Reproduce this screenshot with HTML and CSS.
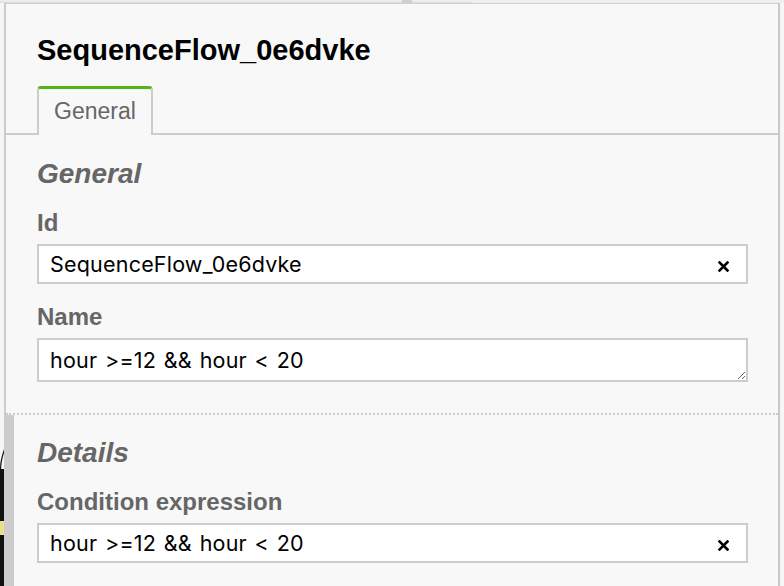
FILE: index.html
```html
<!DOCTYPE html>
<html lang="en">
<head>
<meta charset="utf-8">
<title>Properties Panel</title>
<link rel="stylesheet" href="styles.css">
</head>
<body>
<div class="page">
  <div class="topbar">
    <span class="seg seg-a"></span>
    <span class="seg seg-b"></span>
    <span class="seg seg-c"></span>
  </div>
  <div class="stage">
    <div class="canvas-edge">
      <svg width="4" height="583" viewBox="0 0 4 583">
        <path d="M4 450 C2 456 1 462 1 470 L1 583 L0 583 L0 465 C0 458 2 452 4 446 Z" fill="#111"/>
        <rect x="0" y="466" width="4" height="117" fill="#111"/>
        <rect x="0" y="518" width="4" height="14" fill="#e6e08a"/>
      </svg>
    </div>
    <div class="panel">
      <div class="header">
        <div class="title">SequenceFlow_0e6dvke</div>
      </div>
      <div class="tabs">
        <div class="tab active">General</div>
      </div>
      <div class="group">
        <div class="group-label">General</div>
        <div class="field">
          <label class="field-label">Id</label>
          <div class="input-wrap">
            <input class="input" type="text" value="SequenceFlow_0e6dvke">
            <span class="clear"><svg width="11" height="11" viewBox="0 0 11 11"><path d="M1.5 1.5 L9.5 9.5 M9.5 1.5 L1.5 9.5" stroke="#000" stroke-width="2.6" stroke-linecap="square"/></svg></span>
          </div>
        </div>
        <div class="field">
          <label class="field-label">Name</label>
          <textarea class="textarea">hour &gt;=12 &amp;&amp; hour &lt; 20</textarea>
        </div>
      </div>
      <div class="group hovered">
        <div class="group-toggle"></div>
        <div class="group-label">Details</div>
        <div class="field">
          <label class="field-label">Condition expression</label>
          <div class="input-wrap">
            <input class="input" type="text" value="hour >=12 && hour < 20">
            <span class="clear"><svg width="11" height="11" viewBox="0 0 11 11"><path d="M1.5 1.5 L9.5 9.5 M9.5 1.5 L1.5 9.5" stroke="#000" stroke-width="2.6" stroke-linecap="square"/></svg></span>
          </div>
        </div>
      </div>
    </div>
    <div class="right-edge"></div>
  </div>
</div>
</body>
</html>
```

FILE: styles.css
```css
* { box-sizing: border-box; }

html, body {
  margin: 0;
  padding: 0;
  width: 784px;
  height: 586px;
  overflow: hidden;
  background: #f6f6f6;
}

.page {
  width: 784px;
  height: 586px;
  display: flex;
  flex-direction: column;
  font-family: "Liberation Sans", Arial, sans-serif;
}

.topbar {
  height: 3px;
  display: flex;
  background: #efefef;
  flex: none;
}

.seg { display: block; height: 3px; }
.seg-a { width: 402px; background: #ececec; border-bottom: 1px solid #dcdcdc; }
.seg-b { width: 10px; background: #d0d0d0; }
.seg-c { width: 60px; background: #eeeeee; border-bottom: 1px solid #dcdcdc; }

.stage {
  flex: 1;
  display: flex;
  min-height: 0;
}

.canvas-edge {
  width: 4px;
  flex: none;
  background: #f6f6f6;
}

.canvas-edge svg { display: block; }

.right-edge {
  width: 4px;
  flex: none;
  background: #f6f6f6;
}

.panel {
  flex: 1;
  background: #f8f8f8;
  border-left: 2px solid #cccccc;
  border-right: 2px solid #c8c8c8;
  border-top: 1px solid #d0d0d0;
  overflow: hidden;
}

.header {
  padding: 29px 30px 0 31px;
}

.title {
  font-size: 29px;
  line-height: 34px;
  font-weight: bold;
  color: #000;
}

.tabs {
  margin-top: 19px;
  border-bottom: 2px solid #cccccc;
  padding-left: 31px;
  display: flex;
  height: 49px;
}

.tab {
  width: 116px;
  height: 49px;
  border: 2px solid #cccccc;
  border-bottom: none;
  border-top: 3px solid #52b415;
  border-radius: 4px 4px 0 0;
  background: #f8f8f8;
  color: #666;
  font-size: 23px;
  line-height: 44px;
  text-align: center;
  position: relative;
  z-index: 1;
}

.group {
  position: relative;
  padding: 23px 30px 31px 31px;
  border-bottom: 2px dotted #cccccc;
}

.group.hovered {
  padding-top: 22px;
}

.group-toggle {
  position: absolute;
  left: 0;
  top: 0;
  bottom: 0;
  width: 8px;
  background: #cccccc;
}

.group-label {
  font-size: 28px;
  line-height: 32px;
  font-weight: bold;
  font-style: italic;
  color: #666;
  margin-bottom: 19px;
}

.field {
  margin-bottom: 19px;
}

.field:last-child { margin-bottom: 0; }

.field-label {
  display: block;
  font-size: 24px;
  line-height: 28px;
  font-weight: bold;
  color: #666;
  margin-bottom: 7px;
}

.input-wrap {
  position: relative;
}

.input {
  display: block;
  width: 100%;
  height: 40px;
  border: 2px solid #cccccc;
  border-radius: 0;
  background: #fff;
  padding: 0 40px 0 11px;
  font-family: Inter, "DejaVu Sans", sans-serif;
  font-size: 21.5px;
  letter-spacing: 0.2px;
  word-spacing: 1.5px;
  color: #000;
  outline: none;
}

.clear {
  position: absolute;
  right: 19px;
  top: 17px;
  width: 11px;
  height: 11px;
  display: block;
}

.clear svg { display: block; }

.textarea {
  display: block;
  width: 100%;
  height: 44px;
  border: 2px solid #cccccc;
  border-radius: 0;
  background: #fff;
  padding: 8px 11px 0 11px;
  font-family: Inter, "DejaVu Sans", sans-serif;
  font-size: 21.5px;
  letter-spacing: 0.2px;
  word-spacing: 1.5px;
  line-height: 24px;
  color: #000;
  resize: vertical;
  overflow: hidden;
  outline: none;
}
```
